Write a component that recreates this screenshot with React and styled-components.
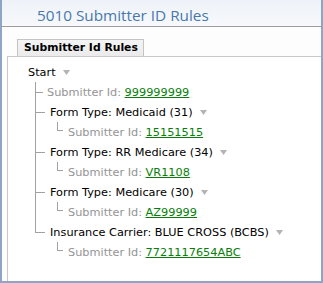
import styled, { createGlobalStyle } from "styled-components";

const GlobalStyle = createGlobalStyle`
    html, body {
        margin: 0;
        padding: 0;
        background: #ffffff;
    }
    * {
        box-sizing: border-box;
    }
`;

const rules = [
    { kind: "Form Type", name: "Medicaid (31)", id: "15151515" },
    { kind: "Form Type", name: "RR Medicare (34)", id: "VR1108" },
    { kind: "Form Type", name: "Medicare (30)", id: "AZ99999" },
    { kind: "Insurance Carrier", name: "BLUE CROSS (BCBS)", id: "7721117654ABC" },
];

function Caret() {
    return (
        <CaretIcon viewBox="0 0 7 5" width="7" height="5">
            <path d="M0 0 H7 L3.5 5 Z" fill="#b4b4b4" />
        </CaretIcon>
    );
}

function App() {
    return (
        <Frame>
            <GlobalStyle />
            <Header>
                <Title>5010 Submitter ID Rules</Title>
            </Header>
            <Body>
                <TabStrip>
                    <Tab>Submitter Id Rules</Tab>
                </TabStrip>
                <Panel>
                    <Row>
                        <Label>Start</Label>
                        <Caret />
                    </Row>
                    <Branches>
                        <Branch>
                            <Rail />
                            <Stack>
                                <Row>
                                    <Tick $width={7} />
                                    <Muted $gap={4}>Submitter Id: </Muted>
                                    <IdLink>999999999</IdLink>
                                </Row>
                            </Stack>
                        </Branch>
                        {rules.map((rule, i) => (
                            <Branch key={rule.id}>
                                <Rail $last={i === rules.length - 1} />
                                <Stack>
                                    <Row>
                                        <Tick $width={9} />
                                        <Label $gap={5}>{rule.kind}: {rule.name}</Label>
                                        <Caret />
                                    </Row>
                                    <ChildRow>
                                        <Elbow />
                                        <Muted $gap={5}>Submitter Id: </Muted>
                                        <IdLink>{rule.id}</IdLink>
                                    </ChildRow>
                                </Stack>
                            </Branch>
                        ))}
                    </Branches>
                </Panel>
            </Body>
        </Frame>
    );
}

const Frame = styled.div`
    display: flex;
    flex-direction: column;
    width: 323px;
    height: 283px;
    overflow: hidden;
    border-left: 2px solid #8fa5c5;
    border-right: 2px solid #8fa5c5;
    border-bottom: 2px solid #8fa5c5;
    background: #fdfdfd;
`;

const Header = styled.div`
    height: 27px;
    padding: 4px 0 0 35px;
    background: linear-gradient(#eef2f8, #f7f9fb);
    border-bottom: 1px solid #9c9c9c;
`;

const Title = styled.div`
    font-family: "Open Sans", "Noto Sans", sans-serif;
    font-size: 15.3px;
    line-height: 22px;
    color: #4877ad;
    white-space: nowrap;
`;

const Body = styled.div`
    flex: 1;
    display: flex;
    flex-direction: column;
    padding: 12px 0 0 5px;
`;

const TabStrip = styled.div`
    display: flex;
    padding-left: 10px;
`;

const Tab = styled.div`
    height: 17px;
    padding: 0 5px 0 6px;
    border: 1px solid #c4c4c4;
    border-bottom: none;
    background: linear-gradient(#f4f4f4, #ebebeb);
    font-family: "DejaVu Sans", Verdana, sans-serif;
    font-weight: 700;
    font-size: 10.8px;
    line-height: 16px;
    color: #000;
    white-space: nowrap;
`;

const Panel = styled.div`
    flex: 1;
    padding: 5px 0 0 20px;
    border-top: 1px solid #c8c8c8;
    border-left: 1px solid #c8c8c8;
    background: #ffffff;
    font-family: "DejaVu Sans", Verdana, sans-serif;
    font-size: 11.3px;
    color: #000;
`;

const Row = styled.div`
    display: flex;
    align-items: center;
    height: 20px;
    white-space: nowrap;
`;

const ChildRow = styled(Row)`
    padding-left: 21px;
`;

const Label = styled.span`
    margin-left: ${props => props.$gap || 0}px;
    color: #000;
`;

const Muted = styled.span`
    margin-left: ${props => props.$gap || 0}px;
    color: #949494;
    white-space: pre;
`;

const IdLink = styled.a`
    color: #07800a;
    text-decoration: underline;
    cursor: pointer;
`;

const CaretIcon = styled.svg`
    margin-left: 7px;
    flex: none;
`;

const Branches = styled.div`
    display: flex;
    flex-direction: column;
    margin-left: 7px;
`;

const Branch = styled.div`
    display: flex;
`;

const Rail = styled.div`
    width: 1px;
    flex: none;
    background: #a2a2a2;
    align-self: ${props => props.$last ? "flex-start" : "stretch"};
    height: ${props => props.$last ? "11px" : "auto"};
`;

const Stack = styled.div`
    display: flex;
    flex-direction: column;
`;

const Tick = styled.span`
    width: ${props => props.$width}px;
    height: 1px;
    flex: none;
    background: #a2a2a2;
`;

const Elbow = styled.span`
    align-self: flex-start;
    width: 6px;
    height: 9px;
    flex: none;
    border-left: 1px solid #a2a2a2;
    border-bottom: 1px solid #a2a2a2;
`;

export default App;
